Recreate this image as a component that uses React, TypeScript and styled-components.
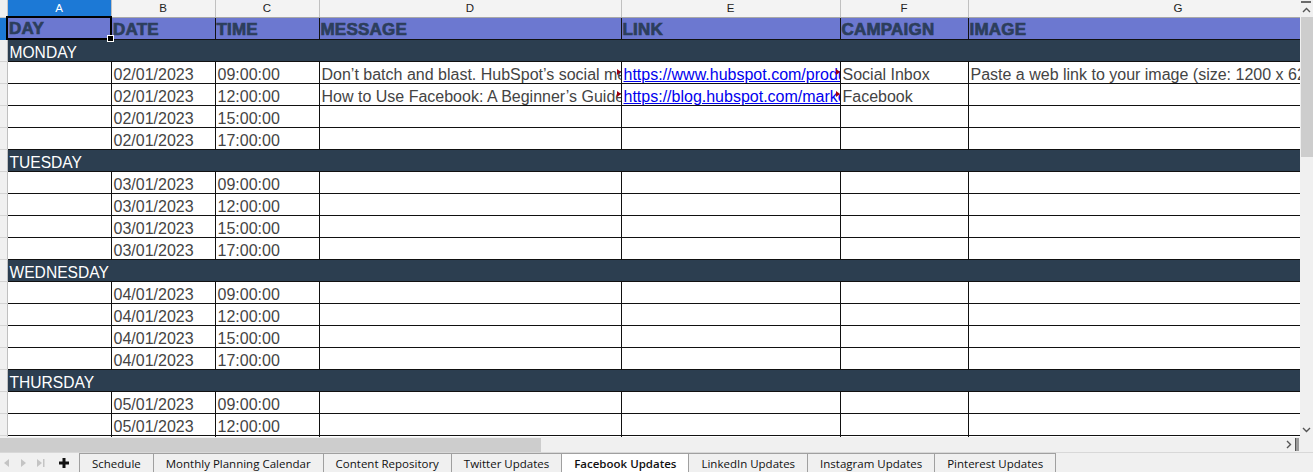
import * as React from "react";
import styled, { createGlobalStyle, css } from "styled-components";

const GlobalStyle = createGlobalStyle`
  html, body {
    margin: 0;
    padding: 0;
    overflow: hidden;
    background: #f0f0f0;
    font-family: "Liberation Sans", Arial, sans-serif;
  }
`;

interface IEntry {
  time: string;
  message?: string;
  link?: string;
  campaign?: string;
  image?: string;
}

interface IDay {
  name: string;
  date: string;
  entries: IEntry[];
}

const times = ["09:00:00", "12:00:00", "15:00:00", "17:00:00"];

const days: IDay[] = [
  {
    name: "MONDAY",
    date: "02/01/2023",
    entries: [
      {
        time: times[0],
        message:
          "Don’t batch and blast. HubSpot’s social media management tools let you schedule posts",
        link: "https://www.hubspot.com/products/marketing/social-inbox",
        campaign: "Social Inbox",
        image: "Paste a web link to your image (size: 1200 x 628 pixels)",
      },
      {
        time: times[1],
        message: "How to Use Facebook: A Beginner’s Guide to Marketing",
        link: "https://blog.hubspot.com/marketing/how-to-use-facebook",
        campaign: "Facebook",
      },
      { time: times[2] },
      { time: times[3] },
    ],
  },
  { name: "TUESDAY", date: "03/01/2023", entries: times.map((time) => ({ time })) },
  { name: "WEDNESDAY", date: "04/01/2023", entries: times.map((time) => ({ time })) },
  { name: "THURSDAY", date: "05/01/2023", entries: times.map((time) => ({ time })) },
];

const columns = [
  { letter: "A", width: 104, title: "DAY" },
  { letter: "B", width: 104, title: "DATE" },
  { letter: "C", width: 104, title: "TIME" },
  { letter: "D", width: 302, title: "MESSAGE" },
  { letter: "E", width: 219, title: "LINK" },
  { letter: "F", width: 128, title: "CAMPAIGN" },
  { letter: "G", width: 420, title: "IMAGE" },
];

const tabs = [
  "Schedule",
  "Monthly Planning Calendar",
  "Content Repository",
  "Twitter Updates",
  "Facebook Updates",
  "LinkedIn Updates",
  "Instagram Updates",
  "Pinterest Updates",
];

const App = () => {
  return (
    <Window>
      <GlobalStyle />
      <Main>
        <Viewport>
          <Sheet>
            <colgroup>
              <col style={{ width: 7 }} />
              {columns.map((c) => (
                <col key={c.letter} style={{ width: c.width }} />
              ))}
            </colgroup>
            <thead>
              <tr>
                <Corner />
                {columns.map((c) => (
                  <ColHead key={c.letter} $active={c.letter === "A"}>
                    {c.letter}
                  </ColHead>
                ))}
              </tr>
            </thead>
            <tbody>
              <TitleRow>
                <RowHead $active />
                {columns.map((c) => (
                  <TitleCell key={c.letter} $selected={c.letter === "A"}>
                    {c.title}
                  </TitleCell>
                ))}
              </TitleRow>
              {days.map((day) => (
                <React.Fragment key={day.name}>
                  <DataRow>
                    <RowHead />
                    <DayCell colSpan={columns.length}>{day.name}</DayCell>
                  </DataRow>
                  {day.entries.map((e) => (
                    <DataRow key={day.name + e.time}>
                      <RowHead />
                      <Cell />
                      <Cell>{day.date}</Cell>
                      <Cell>{e.time}</Cell>
                      <Cell $marker={!!e.message}>{e.message}</Cell>
                      <Cell $marker={!!e.link}>
                        {e.link && <Link href="#">{e.link}</Link>}
                      </Cell>
                      <Cell>{e.campaign}</Cell>
                      <Cell>{e.image}</Cell>
                    </DataRow>
                  ))}
                </React.Fragment>
              ))}
            </tbody>
          </Sheet>
        </Viewport>
        <VScroll>
          <SplitDash />
          <ScrollArrow>
            <svg width="9" height="6" viewBox="0 0 9 6">
              <path d="M1 5 L4.5 1.5 L8 5" fill="none" stroke="#555" strokeWidth="1.4" />
            </svg>
          </ScrollArrow>
          <VThumb />
          <VTrack />
          <ScrollArrow>
            <svg width="9" height="6" viewBox="0 0 9 6">
              <path d="M1 1 L4.5 4.5 L8 1" fill="none" stroke="#555" strokeWidth="1.4" />
            </svg>
          </ScrollArrow>
        </VScroll>
      </Main>
      <HScroll>
        <HThumb />
        <HTrack />
        <ScrollArrow>
          <svg width="6" height="9" viewBox="0 0 6 9">
            <path d="M1 1 L4.5 4.5 L1 8" fill="none" stroke="#555" strokeWidth="1.4" />
          </svg>
        </ScrollArrow>
        <SplitHandle />
      </HScroll>
      <TabBar>
        <NavButtons>
          <svg width="56" height="12" viewBox="0 0 56 12">
            <path d="M9 2 L4 6 L9 10 Z" fill="#c4c4c4" />
            <path d="M21 2 L26 6 L21 10 Z" fill="#c4c4c4" />
            <path d="M37 2 L42 6 L37 10 Z" fill="#c4c4c4" />
            <rect x="43" y="2" width="1.5" height="8" fill="#c4c4c4" />
          </svg>
          <svg width="12" height="12" viewBox="0 0 12 12">
            <path d="M4.5 1 H7.5 V4.5 H11 V7.5 H7.5 V11 H4.5 V7.5 H1 V4.5 H4.5 Z" fill="#111" />
          </svg>
        </NavButtons>
        <Tabs>
          {tabs.map((t) => (
            <Tab key={t} $active={t === "Facebook Updates"}>
              {t}
            </Tab>
          ))}
        </Tabs>
      </TabBar>
    </Window>
  );
};

const Window = styled.div`
  width: 1313px;
  height: 472px;
  display: flex;
  flex-direction: column;
  background: #f0f0f0;
  overflow: hidden;
`;

const Main = styled.div`
  display: flex;
  height: 437px;
`;

const Viewport = styled.div`
  width: 1300px;
  overflow: hidden;
  background: #fff;
`;

const Sheet = styled.table`
  table-layout: fixed;
  border-collapse: collapse;
  width: 1388px;
`;

const Corner = styled.th`
  height: 16px;
  padding: 0;
  background: #f0f0f0;
  border-right: 1px solid #c8c8c8;
  border-bottom: 1px solid #c8c8c8;
`;

const ColHead = styled.th<{ $active?: boolean }>`
  height: 16px;
  padding: 0;
  font-size: 11.5px;
  font-weight: normal;
  line-height: 16px;
  text-align: center;
  color: ${(p) => (p.$active ? "#fff" : "#222")};
  background: ${(p) => (p.$active ? "#1c79d6" : "#f3f3f3")};
  border-right: 1px solid #c0c0c0;
  border-bottom: 1px solid ${(p) => (p.$active ? "#1c79d6" : "#a8a8a8")};
`;

const RowHead = styled.td<{ $active?: boolean }>`
  padding: 0;
  background: ${(p) => (p.$active ? "#1c79d6" : "#f0f0f0")};
  border-right: 1px solid #c0c0c0;
  border-bottom: 1px solid ${(p) => (p.$active ? "#1c79d6" : "#d4d4d4")};
`;

const TitleRow = styled.tr`
  height: 22px;
`;

const TitleCell = styled.td<{ $selected?: boolean }>`
  position: relative;
  padding: 0 1px;
  background: #6c78d0;
  color: #2c3e5c;
  font-size: 17px;
  font-weight: bold;
  -webkit-text-stroke: 0.7px #2c3e5c;
  letter-spacing: 0.2px;
  line-height: 18px;
  vertical-align: bottom;
  white-space: nowrap;
  overflow: hidden;
  border: 1px solid #111;
  ${(p) =>
    p.$selected &&
    css`
      overflow: visible;
      border: 2px solid #000;
      &::after {
        content: "";
        position: absolute;
        right: -4px;
        bottom: -4px;
        width: 5px;
        height: 5px;
        background: #000;
        border: 1px solid #fff;
        z-index: 2;
      }
    `}
`;

const DataRow = styled.tr`
  height: 22px;
`;

const DayCell = styled.td`
  padding: 0 2px;
  background: #2c3e50;
  color: #fff;
  font-size: 15.6px;
  line-height: 17px;
  vertical-align: bottom;
  border: 1px solid #111;
  white-space: nowrap;
`;

const Cell = styled.td<{ $marker?: boolean }>`
  position: relative;
  padding: 0 2px;
  color: #444;
  font-size: 16px;
  line-height: 17px;
  vertical-align: bottom;
  white-space: nowrap;
  overflow: hidden;
  border: 1px solid #111;
  ${(p) =>
    p.$marker &&
    css`
      &::after {
        content: "";
        position: absolute;
        right: 0;
        top: 50%;
        margin-top: -3px;
        border-left: 4px solid #9a0010;
        border-top: 3px solid transparent;
        border-bottom: 3px solid transparent;
      }
    `}
`;

const Link = styled.a`
  color: #0000ee;
  text-decoration: underline;
`;

const VScroll = styled.div`
  width: 13px;
  display: flex;
  flex-direction: column;
  background: #f0f0f0;
`;

const SplitDash = styled.div`
  height: 2px;
  margin: 1px 2px 0 1px;
  background: #6a6a6a;
`;

const ScrollArrow = styled.div`
  display: flex;
  align-items: center;
  justify-content: center;
  width: 13px;
  height: 14px;
  flex-shrink: 0;
`;

const VThumb = styled.div`
  height: 140px;
  margin-left: 1px;
  background: #cdcdcd;
`;

const VTrack = styled.div`
  flex: 1;
`;

const HScroll = styled.div`
  height: 15px;
  display: flex;
  align-items: center;
  background: #f0f0f0;
  padding-right: 14px;
`;

const HThumb = styled.div`
  width: 541px;
  height: 14px;
  background: #cdcdcd;
`;

const HTrack = styled.div`
  flex: 1;
`;

const SplitHandle = styled.div`
  width: 3px;
  height: 13px;
  background: #9a9a9a;
  border-left: 1px solid #555;
`;

const TabBar = styled.div`
  height: 20px;
  display: flex;
  align-items: flex-end;
  border-top: 1px solid #d8d8d8;
  box-sizing: border-box;
`;

const NavButtons = styled.div`
  width: 79px;
  height: 19px;
  display: flex;
  align-items: center;
  gap: 2px;
  box-sizing: border-box;
`;

const Tabs = styled.div`
  display: flex;
  height: 19px;
`;

const Tab = styled.div<{ $active?: boolean }>`
  display: flex;
  align-items: center;
  padding: 0 12px;
  height: 18px;
  font-family: "Open Sans", "Liberation Sans", sans-serif;
  font-size: 11.5px;
  font-weight: ${(p) => (p.$active ? 600 : 400)};
  color: #111;
  background: ${(p) => (p.$active ? "#fff" : "#f0f0f0")};
  border: 1px solid #a0a0a0;
  border-left: none;
  border-bottom: ${(p) => (p.$active ? "none" : "1px solid #a0a0a0")};
  &:first-child {
    border-left: 1px solid #a0a0a0;
  }
`;

export default App;
